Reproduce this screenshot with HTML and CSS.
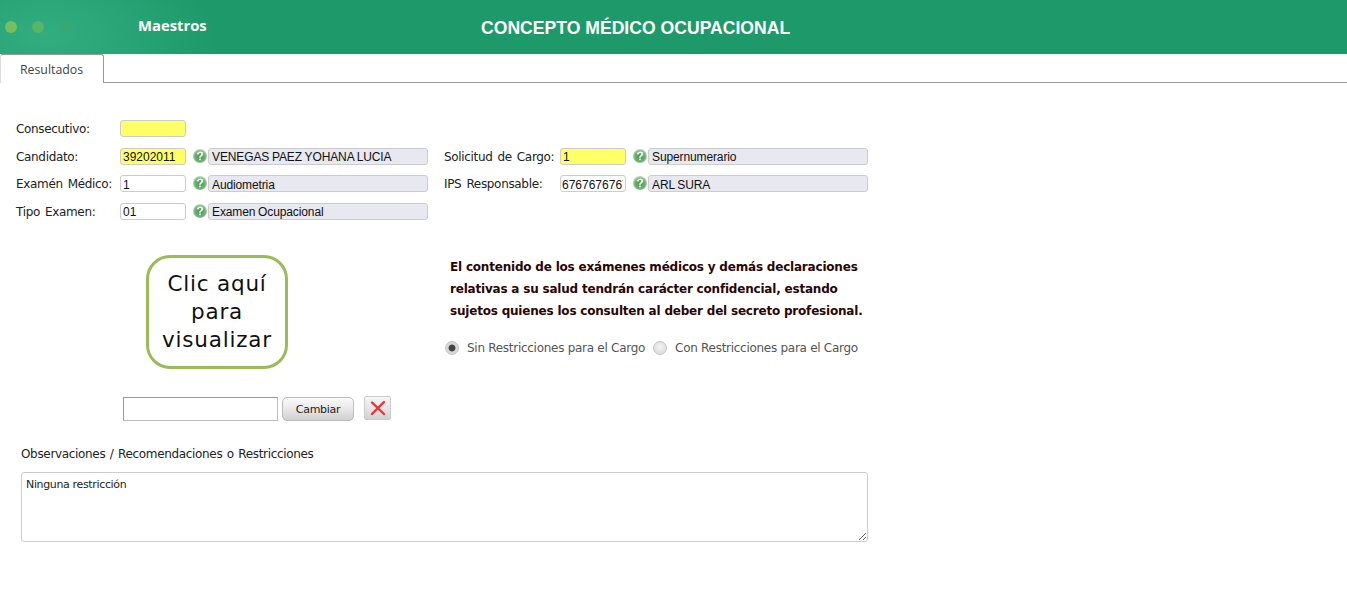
FILE: index.html
```html
<!DOCTYPE html>
<html lang="es">
<head>
<meta charset="utf-8">
<title>Concepto Médico Ocupacional</title>
<link rel="stylesheet" href="styles.css">
</head>
<body>
<svg class="defs" width="0" height="0" aria-hidden="true">
  <defs>
    <radialGradient id="ballFill" cx="50%" cy="55%" r="58%">
      <stop offset="0" stop-color="#3f9a4e"/>
      <stop offset="0.62" stop-color="#6fb074"/>
      <stop offset="1" stop-color="#d4e6d2"/>
    </radialGradient>
    <symbol id="help" viewBox="0 0 14 14">
      <circle cx="7" cy="7" r="7" fill="url(#ballFill)"/>
      <path d="M3.9 5.2C4.2 3.2 5.8 2.3 7.4 2.4c1.9.1 3 1.2 2.9 2.7-.1 1.3-1 1.9-1.8 2.4-.5.3-.7.7-.7 1.3H6.1c0-1.2.4-1.9 1.2-2.4.6-.4 1-.8 1-1.4 0-.6-.4-1-1.1-1-.8 0-1.3.5-1.5 1.4z" fill="#f4faf2"/>
      <rect x="6" y="9.4" width="1.9" height="1.9" rx=".6" fill="#f4faf2"/>
    </symbol>
  </defs>
</svg>

<header class="topbar">
  <div class="dots"><span class="dot dot-a"></span><span class="dot dot-b"></span><span class="dot dot-c"></span></div>
  <div class="menu-name">Maestros</div>
  <h1 class="title">CONCEPTO MÉDICO OCUPACIONAL</h1>
</header>

<nav class="tabs"><div class="tab">Resultados</div></nav>

<main class="content">
  <section class="fields">
    <label class="lbl">Consecutivo:</label>
    <input class="inp inp-req" type="text">

    <label class="lbl">Candidato:</label>
    <input class="inp inp-req" type="text" value="39202011">
    <svg class="help"><use href="#help"/></svg>
    <input class="desc" type="text" value="VENEGAS PAEZ YOHANA LUCIA">
    <label class="lbl lbl-2">Solicitud de Cargo:</label>
    <input class="inp inp-req" type="text" value="1">
    <svg class="help"><use href="#help"/></svg>
    <input class="desc" type="text" value="Supernumerario">

    <label class="lbl">Examén Médico:</label>
    <input class="inp text-low" type="text" value="1">
    <svg class="help"><use href="#help"/></svg>
    <input class="desc text-low" type="text" value="Audiometria">
    <label class="lbl lbl-2">IPS Responsable:</label>
    <input class="inp inp-long text-low" type="text" value="676767676767">
    <svg class="help"><use href="#help"/></svg>
    <input class="desc text-low" type="text" value="ARL SURA">

    <label class="lbl">Tipo Examen:</label>
    <input class="inp" type="text" value="01">
    <svg class="help"><use href="#help"/></svg>
    <input class="desc" type="text" value="Examen Ocupacional">
  </section>

  <section class="middle">
    <div class="photo-col">
      <div class="photo">Clic aquí<br>para<br>visualizar</div>
      <div class="file-row">
        <input class="file-name" type="text">
        <button class="btn" type="button">Cambiar</button>
        <button class="btn-x" type="button" aria-label="Quitar">
          <svg width="16" height="16" viewBox="0 0 16 16"><path d="M2 2.5 14 14M14 2 2 14" stroke="#ee2f3a" stroke-width="2.4" stroke-linecap="round"/></svg>
        </button>
      </div>
    </div>
    <div class="notice-col">
      <p class="notice">El contenido de los exámenes médicos y demás declaraciones<br>relativas a su salud tendrán carácter confidencial, estando<br>sujetos quienes los consulten al deber del secreto profesional.</p>
      <div class="radios">
        <label class="radio-opt"><input class="radio" type="radio" name="restr" checked>Sin Restricciones para el Cargo</label>
        <label class="radio-opt"><input class="radio" type="radio" name="restr">Con Restricciones para el Cargo</label>
      </div>
    </div>
  </section>

  <section class="obs">
    <label class="obs-label">Observaciones / Recomendaciones o Restricciones</label>
    <textarea class="obs-text">Ninguna restricción</textarea>
  </section>
</main>
</body>
</html>
```
FILE: styles.css
```css
* { box-sizing: border-box; }
html, body { margin: 0; padding: 0; background: #fff; }
body { font-family: "DejaVu Sans", sans-serif; font-size: 12px; color: #222; overflow: hidden; height: 592px; }
.defs { display: block; height: 0; }

.topbar {
  height: 54px;
  display: flex;
  align-items: center;
  background: radial-gradient(ellipse 170px 90px at 45px 35px, #32ad80 0%, #28a476 50%, #1e9969 100%);
  color: #fff;
}
.dots { display: flex; gap: 15px; margin-left: 5px; width: 134px; }
.dot { width: 12px; height: 12px; border-radius: 50%; filter: blur(.6px); }
.dot-a { background: #74c05c; }
.dot-b { background: #58b565; }
.dot-c { background: #37a970; }
.menu-name { font-family: "Open Sans", sans-serif; font-weight: 700; font-size: 14.8px; width: 342px; margin-left: -1px; margin-right: 1px; padding-bottom: 5px; }
.title { margin: 0; font-family: "Liberation Sans", sans-serif; font-weight: 700; font-size: 17.6px; padding-top: 3px; }

.tabs { height: 29px; border-bottom: 1px solid #999; display: flex; }
.tab {
  width: 104px; height: 29px;
  border: 1px solid #999; border-bottom: 0; border-left-color: #ddd;
  border-radius: 3px 3px 0 0;
  background: #fff;
  font-family: "Open Sans", sans-serif;
  font-size: 12.3px; color: #444;
  padding: 6px 0 0 19px;
}

.content { padding: 37px 0 0 0; }

.fields {
  display: grid;
  grid-template-columns: 104px 66px 22px 220px 132px 66px 22px 220px;
  grid-template-rows: 28px 27px 28px 17px;
  margin-left: 16px;
  align-items: start;
}
.lbl { grid-column: 1; height: 17px; line-height: 18px; font-family: "DejaVu Sans", sans-serif; font-size: 12px; letter-spacing: -.33px; word-spacing: 1.5px; color: #222; white-space: nowrap; }
.lbl-2 { grid-column: 5; margin-left: 16px; }
.inp, .desc {
  height: 17px;
  margin: 0; padding: 1px 2px;
  border-radius: 3px;
  font-family: "Liberation Sans", sans-serif; font-size: 12px; color: #111;
  outline: 0;
}
.inp { width: 66px; border: 1px solid #ccc; background: #fff; }
.inp-req { background: #ffff66; }
.inp-long { padding-left: 1px; }
.desc { width: 220px; padding-left: 3px; border: 1px solid #ccc; background: #e8e8f0; letter-spacing: -.12px; word-spacing: -.4px; }
.text-low { padding-top: 2px; padding-bottom: 0; }
.help { width: 14px; height: 14px; margin: 1px 0 0 7px; }

.middle { display: flex; margin-top: 35px; }
.photo-col { width: 450px; padding-left: 123px; }
.photo {
  width: 142px; height: 114px; margin-left: 23px;
  border: 3px solid #9bbb59; border-radius: 24px;
  font-family: "DejaVu Sans", sans-serif; font-size: 21.5px; letter-spacing: .8px; line-height: 28px; color: #111;
  text-align: center; padding-top: 12px; white-space: nowrap;
}
.file-row { display: flex; align-items: flex-start; margin-top: 28px; }
.file-name { width: 155px; height: 24px; border: 1px solid #999; border-right-color: #bbb; border-bottom-color: #bbb; margin: 0; padding: 0 3px; background: #fff; }
.btn {
  width: 72px; height: 24px; margin-left: 4px; padding: 1px 0 0;
  border: 1px solid #bbb; border-radius: 5px;
  background: linear-gradient(#fafafa, #e8e8e8 50%, #cfcfcf);
  font-family: "DejaVu Sans", sans-serif; font-size: 11px; letter-spacing: -.3px; color: #222;
}
.btn-x {
  width: 27px; height: 24px; margin: -1px 0 0 10px; padding: 0;
  display: flex; align-items: center; justify-content: center;
  border: 1px solid #ccc; border-radius: 2px;
  background: linear-gradient(#f6f6f6, #e4e4e4 55%, #d0d0d0);
}

.notice-col { padding-top: 1px; }
.notice { margin: 0; font-family: "DejaVu Sans", sans-serif; font-weight: 700; font-size: 12px; letter-spacing: -.2px; line-height: 22px; color: #2a0505; white-space: nowrap; }
.radios { display: flex; margin: 19px 0 0 -5px; gap: 8px; }
.radio-opt { display: flex; align-items: center; font-family: "DejaVu Sans", sans-serif; font-size: 12px; letter-spacing: -.28px; color: #555; white-space: nowrap; }
.radio {
  appearance: none; -webkit-appearance: none;
  width: 14px; height: 14px; margin: 0 8px 0 0;
  border-radius: 50%; border: 1px solid #c4c4c4;
  background: radial-gradient(circle at 50% 40%, #f4f4f4, #d4d4d4);
}
.radio:checked { background: radial-gradient(circle, #444 0 3.2px, #d8d8d8 3.8px); }

.obs { margin: 26px 0 0 21px; width: 847px; }
.obs-label { display: block; font-family: "DejaVu Sans", sans-serif; font-size: 12px; letter-spacing: -.33px; word-spacing: 1px; color: #222; }
.obs-text {
  display: block; width: 847px; height: 70px; margin-top: 11px; padding: 5px 4px 4px;
  border: 1px solid #ccc; border-radius: 3px;
  font-family: "DejaVu Sans", sans-serif; font-size: 11px; letter-spacing: -.35px; color: #222;
}
```
